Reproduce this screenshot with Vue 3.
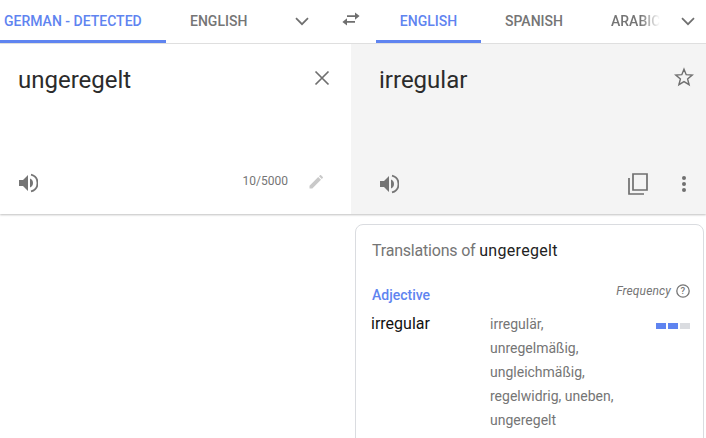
<script setup>
const lines = ['irregulär,', 'unregelmäßig,', 'ungleichmäßig,', 'regelwidrig, uneben,', 'ungeregelt']
</script>

<template>
  <div class="page">
    <header class="bar">
      <div class="tabs left">
        <div class="tab active t1">GERMAN - DETECTED</div>
        <div class="tab t2">ENGLISH</div>
        <svg class="chev c1" viewBox="0 0 14 9" width="14" height="9"><path d="M1 1.2 7 7.2 13 1.2" fill="none" stroke="#6f6f6f" stroke-width="1.7"/></svg>
        <svg class="swap" viewBox="0 0 20 14" width="20" height="14"><path d="M14 0.5V3.2H6V5H14V7.7L18.6 4.1ZM6 6.3 1.4 9.9 6 13.5V10.8H14V9H6Z" fill="#6f6f6f"/></svg>
      </div>
      <div class="tabs right">
        <div class="tab active t3">ENGLISH</div>
        <div class="tab t4">SPANISH</div>
        <div class="tab t5">ARABIC</div>
        <svg class="chev c2" viewBox="0 0 14 9" width="14" height="9"><path d="M1 1.2 7 7.2 13 1.2" fill="none" stroke="#6f6f6f" stroke-width="1.7"/></svg>
      </div>
    </header>
    <section class="panels">
      <div class="panel src">
        <div class="main">
          <div class="word">ungeregelt</div>
          <svg class="x" viewBox="0 0 16 16" width="16" height="16"><path d="M1.5 1.5 14.5 14.5M14.5 1.5 1.5 14.5" stroke="#6f6f6f" stroke-width="1.7" fill="none"/></svg>
        </div>
        <div class="foot">
          <svg viewBox="0 0 20 20" width="20" height="20"><path d="M1 7V13H5L10 18V2L5 7ZM12 5.5V14.5C14 13.8 15 12 15 10S14 6.2 12 5.5Z" fill="#757575"/><path d="M13 1.6C17 2.6 19.5 6 19.5 10S17 17.4 13 18.4" fill="none" stroke="#757575" stroke-width="1.8"/></svg>
          <span class="count">10/5000</span>
          <svg class="pen" viewBox="0 0 16 16" width="16" height="16"><path d="M0.5 12.7V15.5H3.3L12 6.8 9.2 4ZM13.8 5C14.1 4.7 14.1 4.2 13.8 3.9L12.1 2.2C11.8 1.9 11.3 1.9 11 2.2L10 3.2 12.8 6Z" fill="#c9c9c9"/></svg>
        </div>
      </div>
      <div class="panel dst">
        <div class="main">
          <div class="word">irregular</div>
          <svg class="star" viewBox="0 0 20 20" width="20" height="20"><path d="M10 2.2 12.2 7.7 18.2 8.1 13.6 11.9 15.1 17.7 10 14.6 4.9 17.7 6.4 11.9 1.8 8.1 7.8 7.7Z" fill="none" stroke="#6f6f6f" stroke-width="1.4"/></svg>
        </div>
        <div class="foot">
          <svg viewBox="0 0 20 20" width="20" height="20"><path d="M1 7V13H5L10 18V2L5 7ZM12 5.5V14.5C14 13.8 15 12 15 10S14 6.2 12 5.5Z" fill="#757575"/><path d="M13 1.6C17 2.6 19.5 6 19.5 10S17 17.4 13 18.4" fill="none" stroke="#757575" stroke-width="1.8"/></svg>
          <svg class="copy" viewBox="0 0 20 22" width="20" height="22"><path d="M1 5V21H16M5 1H19V17H5Z" fill="none" stroke="#6f6f6f" stroke-width="1.7"/></svg>
          <svg class="more" viewBox="0 0 4 16" width="4" height="16"><circle cx="2" cy="2" r="2" fill="#6f6f6f"/><circle cx="2" cy="8" r="2" fill="#6f6f6f"/><circle cx="2" cy="14" r="2" fill="#6f6f6f"/></svg>
        </div>
      </div>
    </section>
    <section class="lower">
      <div class="card">
        <div class="title"><span>Translations of </span><b>ungeregelt</b></div>
        <div class="headrow">
          <div class="pos">Adjective</div>
          <div class="freq"><i>Frequency</i>
            <svg viewBox="0 0 14 14" width="14" height="14"><circle cx="7" cy="7" r="6.2" fill="none" stroke="#757575" stroke-width="1.3"/><text x="7" y="10.3" text-anchor="middle" font-size="9.5" font-weight="500" font-family="Roboto" fill="#757575">?</text></svg>
          </div>
        </div>
        <div class="entry">
          <div class="term">irregular</div>
          <div class="syn"><div v-for="l in lines" :key="l">{{ l }}</div></div>
          <div class="bars"><span class="on"></span><span class="on"></span><span></span></div>
        </div>
      </div>
    </section>
  </div>
</template>

<style scoped>
.page { width: 706px; height: 438px; overflow: hidden; font-family: Roboto, sans-serif; background: #fff; }
.bar { display: flex; height: 44px; border-bottom: 1px solid #e3e3e3; box-sizing: border-box; }
.tabs { display: flex; align-items: stretch; position: relative; height: 43px; }
.tabs > * { flex: none; }
.left { width: 351px; flex: none; }
.right { flex: 1; }
.tab { font-size: 14px; font-weight: 500; color: #757575; line-height: 42px; box-sizing: border-box; white-space: nowrap; height: 43px; }
.tab.active { color: #5f84f0; border-bottom: 3px solid #5f84f0; }
.t1 { width: 166px; padding-left: 4px; }
.t2 { margin-left: 24px; width: 84px; }
.c1 { margin: 17px 0 0 21px; }
.swap { margin: 12px 0 0 32px; }
.t3 { margin-left: 25px; width: 105px; text-align: center; }
.t4 { margin-left: 24px; width: 84px; }
.t5 { margin-left: 22px; width: 49px; overflow: hidden; -webkit-mask-image: linear-gradient(90deg,#000 60%,transparent 100%); mask-image: linear-gradient(90deg,#000 60%,transparent 100%); }
.c2 { margin: 17px 0 0 21px; }
.panels { display: flex; height: 170px; box-shadow: 0 1px 2px rgba(0,0,0,.25); position: relative; }
.panel { display: flex; flex-direction: column; justify-content: space-between; box-sizing: border-box; }
.src { width: 351px; padding: 0 26px 0 18px; }
.dst { flex: 1; background: #f4f4f4; padding: 0 20px 0 28px; }
.main { display: flex; justify-content: space-between; align-items: flex-start; }
.word { font-size: 24px; line-height: 32px; color: #2b2b2b; margin-top: 20px; }
.x { margin-top: 26px; margin-right: -5px; }
.star { margin-top: 23px; margin-right: -8px; }
.foot { display: flex; align-items: center; height: 24px; margin-bottom: 19px; }
.dst .foot { margin-bottom: 18px; }
.count { margin-left: auto; font-size: 12px; color: #757575; margin-right: 21px; margin-bottom: 4px; }
.pen { margin-bottom: 4px; }
.copy { margin-left: auto; margin-right: 34px; }
.lower { display: flex; justify-content: flex-end; padding: 10px 2px 0 0; }
.card { width: 349px; height: 260px; box-sizing: border-box; border: 1px solid #dadce0; border-radius: 8px; padding: 16px 13px 0 16px; background: #fff; }
.title { font-size: 16px; line-height: 20px; color: #757575; }
.title span { letter-spacing: -.2px; }
.title b { font-weight: 400; color: #222; letter-spacing: .3px; }
.headrow { display: flex; justify-content: space-between; margin-top: 20px; }
.pos { font-size: 14px; font-weight: 500; color: #5f84f0; line-height: 20px; margin-top: 4px; }
.freq { display: flex; align-items: center; gap: 5px; font-size: 12px; color: #757575; height: 16px; letter-spacing: .15px; margin-top: 2px; }
.entry { display: flex; margin: 7px 0 0 -1px; }
.term { width: 119px; font-size: 16px; line-height: 24px; color: #111; }
.syn { font-size: 14px; line-height: 24px; color: #757575; flex: 1; }
.bars { display: flex; gap: 2px; margin-top: 11px; height: 6px; }
.bars span { width: 10px; height: 6px; background: #dadce0; }
.bars .on { background: #5f84f0; }
</style>
